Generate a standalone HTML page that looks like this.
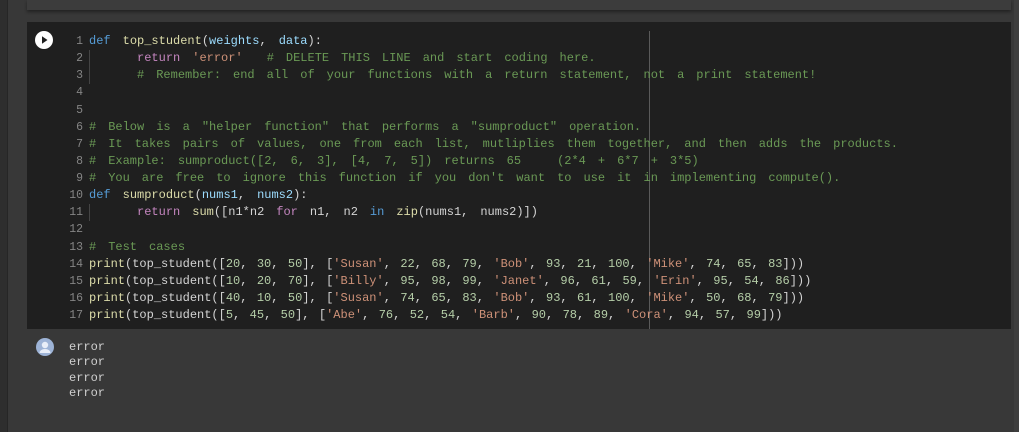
<!DOCTYPE html>
<html><head><meta charset="utf-8"><style>
body{margin:0;width:1019px;height:432px;background:#383838;position:relative;overflow:hidden;font-family:"Liberation Mono","Noto Sans CJK SC",monospace;}
.left{position:absolute;left:0;top:0;width:7px;height:432px;background:#2e2e2e;border-right:1px solid #262626}
.prev{position:absolute;left:27px;top:0;width:984px;height:10px;background:#3c3c3c;box-shadow:0 2px 3px rgba(0,0,0,.4)}
.sb{position:absolute;left:1014px;top:0;width:5px;height:432px;background:#3e3e3e}
.cell{position:absolute;left:27px;top:22px;width:984px;height:307px;background:#1f1f1f}
.code{position:absolute;left:89px;top:33px;font-family:"Liberation Mono",monospace;font-size:12px;line-height:17.125px;white-space:pre;word-spacing:-1.2px;color:#d4d4d4}
.pr{word-spacing:-2.5px}
.ln{position:absolute;left:50px;top:33px;width:33px;text-align:right;font-size:11.5px;line-height:17.125px;color:#858585;white-space:pre}
.k{color:#569cd6}.f{color:#dcdcaa}.p{color:#9cdcfe}.r{color:#c586c0}.s{color:#ce9178}.c{color:#6a9955}.n{color:#b5cea8}
.ruler{position:absolute;left:649px;top:31px;width:1px;height:298px;background:#5a5a5a}
.guide{position:absolute;left:89px;width:1px;background:#444}
.out{position:absolute;left:69px;top:340px;font-family:"Liberation Mono",monospace;font-size:12px;line-height:15.3px;color:#d0d0d0;white-space:pre}
</style></head><body>
<div class="left"></div><div class="prev"></div><div class="sb"></div>
<div class="cell"></div>
<svg style="position:absolute;left:35px;top:31px" width="18" height="18"><circle cx="9" cy="9" r="9" fill="#fff"/><path d="M7 5.2L12.5 9L7 12.8Z" fill="#1f1f1f"/></svg>
<div class="ruler"></div>
<div class="guide" style="top:50px;height:34px"></div>
<div class="guide" style="top:204px;height:17px"></div>
<div class="ln">1
2
3
4
5
6
7
8
9
10
11
12
13
14
15
16
17</div>
<div class="code"><span class="k">def</span>  <span class="f">top_student</span>(<span class="p">weights</span>,  <span class="p">data</span>):
        <span class="r">return</span>  <span class="s">'error'</span>    <span class="c">#  DELETE  THIS  LINE  and  start  coding  here.</span>
        <span class="c">#  Remember:  end  all  of  your  functions  with  a  return  statement,  not  a  print  statement!</span>


<span class="c">#  Below  is  a  "helper  function"  that  performs  a  "sumproduct"  operation.</span>
<span class="c">#  It  takes  pairs  of  values,  one  from  each  list,  mutliplies  them  together,  and  then  adds  the  products.</span>
<span class="c">#  Example:  sumproduct([2,  6,  3],  [4,  7,  5])  returns  65      (2*4  +  6*7  +  3*5)</span>
<span class="c">#  You  are  free  to  ignore  this  function  if  you  don't  want  to  use  it  in  implementing  compute().</span>
<span class="k">def</span>  <span class="f">sumproduct</span>(<span class="p">nums1</span>,  <span class="p">nums2</span>):
        <span class="r">return</span>  <span class="f">sum</span>([n1*n2  <span class="r">for</span>  n1,  n2  <span class="k">in</span>  <span class="f">zip</span>(nums1,  nums2)])

<span class="c">#  Test  cases</span>
<span class="pr"><span class="f">print</span>(top_student([<span class="n">20</span>,  <span class="n">30</span>,  <span class="n">50</span>],  [<span class="s">'Susan'</span>,  <span class="n">22</span>,  <span class="n">68</span>,  <span class="n">79</span>,  <span class="s">'Bob'</span>,  <span class="n">93</span>,  <span class="n">21</span>,  <span class="n">100</span>,  <span class="s">'Mike'</span>,  <span class="n">74</span>,  <span class="n">65</span>,  <span class="n">83</span>]))
<span class="f">print</span>(top_student([<span class="n">10</span>,  <span class="n">20</span>,  <span class="n">70</span>],  [<span class="s">'Billy'</span>,  <span class="n">95</span>,  <span class="n">98</span>,  <span class="n">99</span>,  <span class="s">'Janet'</span>,  <span class="n">96</span>,  <span class="n">61</span>,  <span class="n">59</span>,  <span class="s">'Erin'</span>,  <span class="n">95</span>,  <span class="n">54</span>,  <span class="n">86</span>]))
<span class="f">print</span>(top_student([<span class="n">40</span>,  <span class="n">10</span>,  <span class="n">50</span>],  [<span class="s">'Susan'</span>,  <span class="n">74</span>,  <span class="n">65</span>,  <span class="n">83</span>,  <span class="s">'Bob'</span>,  <span class="n">93</span>,  <span class="n">61</span>,  <span class="n">100</span>,  <span class="s">'Mike'</span>,  <span class="n">50</span>,  <span class="n">68</span>,  <span class="n">79</span>]))
<span class="f">print</span>(top_student([<span class="n">5</span>,  <span class="n">45</span>,  <span class="n">50</span>],  [<span class="s">'Abe'</span>,  <span class="n">76</span>,  <span class="n">52</span>,  <span class="n">54</span>,  <span class="s">'Barb'</span>,  <span class="n">90</span>,  <span class="n">78</span>,  <span class="n">89</span>,  <span class="s">'Cora'</span>,  <span class="n">94</span>,  <span class="n">57</span>,  <span class="n">99</span>]))</span></div>
<svg style="position:absolute;left:36px;top:338px" width="18" height="18"><circle cx="9" cy="9" r="9" fill="#9db3d6"/><circle cx="9" cy="7" r="3.2" fill="#e8eef8"/><path d="M3.5 15a5.5 4 0 0 1 11 0z" fill="#e8eef8"/></svg>
<div class="out">error
error
error
error</div>
</body></html>
